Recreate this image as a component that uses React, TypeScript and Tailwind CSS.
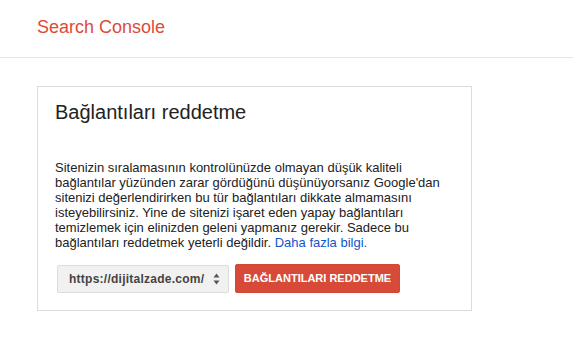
function SelectArrows() {
  return (
    <svg width="7" height="12" viewBox="0 0 7 12" className="shrink-0">
      <path d="M3.5 0.5 L6.5 4.5 L0.5 4.5 Z" fill="#555" />
      <path d="M3.5 11.5 L6.5 7.5 L0.5 7.5 Z" fill="#555" />
    </svg>
  );
}

export default function App() {
  return (
    <div className="min-h-[350px] w-[573px] bg-white font-['Liberation_Sans',Arial,sans-serif]">
      <header className="h-[58px] border-b border-[#e5e5e5] flex items-center pl-[37px] pb-[3px]">
        <span className="text-[18px] text-[#dd4b39]">Search Console</span>
      </header>

      <div className="pl-[37px] pt-[28px]">
        <div className="w-[435px] border border-[#dcdcdc] px-[17px] pt-[14px] pb-[17px]">
          <h1 className="text-[20px] leading-[23px] text-[#222]">Bağlantıları reddetme</h1>

          <p className="mt-[36px] text-[13px] leading-[15px] text-[#222] w-[392px]">
            Sitenizin sıralamasının kontrolünüzde olmayan düşük kaliteli bağlantılar yüzünden zarar
            gördüğünü düşünüyorsanız Google'dan sitenizi değerlendirirken bu tür bağlantıları dikkate
            almamasını isteyebilirsiniz. Yine de sitenizi işaret eden yapay bağlantıları temizlemek
            için elinizden geleni yapmanız gerekir. Sadece bu bağlantıları reddetmek yeterli
            değildir. <a className="text-[#1155cc]">Daha fazla bilgi.</a>
          </p>

          <div className="mt-[14px] flex items-center gap-[6px] pl-[2px]">
            <div className="w-[172px] h-[28px] rounded-[2px] border border-[#dcdcdc] bg-[#f1f1f1] flex items-center justify-between pl-[11px] pr-[8px]">
              <span className="text-[12px] font-bold tracking-[0.25px] text-[#444]">
                https://dijitalzade.com/
              </span>
              <SelectArrows />
            </div>
            <button className="w-[165px] h-[29px] rounded-[2px] bg-[#d84a38] border border-[#d14836] text-white text-[11px] font-bold">
              BAĞLANTILARI REDDETME
            </button>
          </div>
        </div>
      </div>
    </div>
  );
}
